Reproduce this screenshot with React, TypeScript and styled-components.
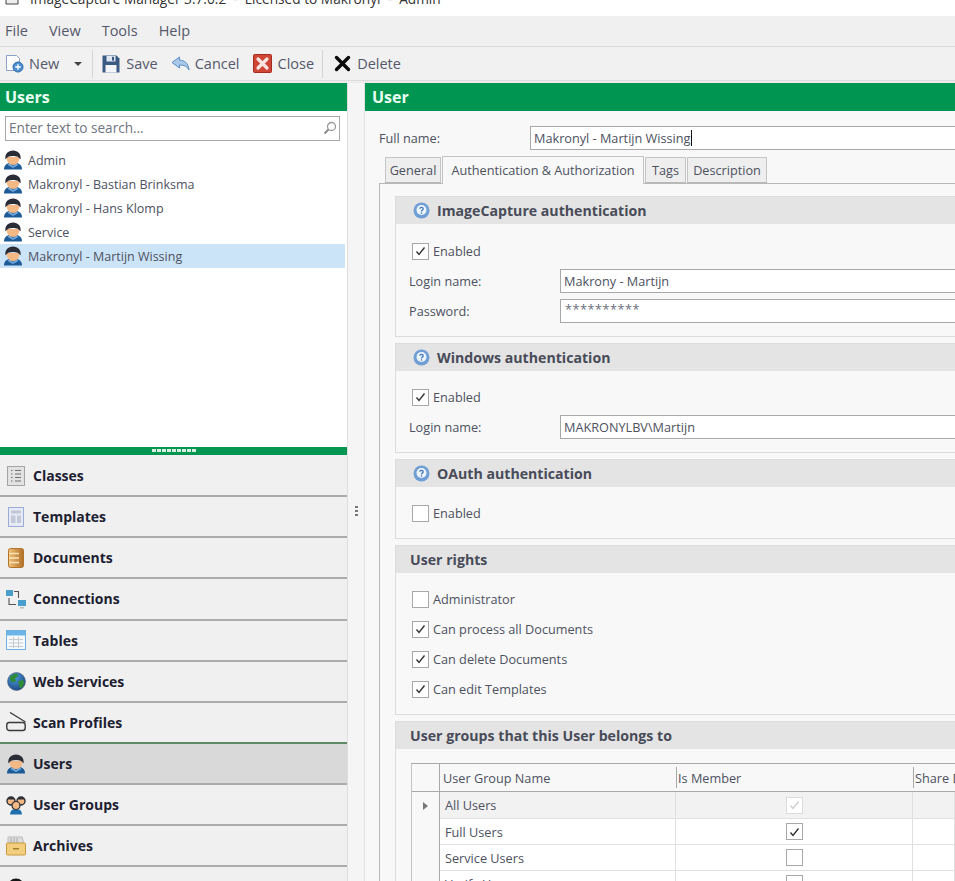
import React from "react";
import styled, { createGlobalStyle } from "styled-components";

const Global = createGlobalStyle`
  html, body { margin: 0; padding: 0; background: #fff; }
  * { box-sizing: border-box; }
  body { font-family: "Open Sans", "Noto Sans", sans-serif; }
`;

const Page = styled.div`
  width: 955px; height: 881px; overflow: hidden; display: flex; flex-direction: column;
  background: #f0f0f0; color: #4d5160; font-size: 12.7px;
`;
const TitleBar = styled.div`
  height: 16px; flex: none; background: #fff; display: flex; align-items: center; padding-left: 5px; overflow: hidden;
  font-size: 13.7px; color: #333; white-space: pre;
`;
const TitleInner = styled.div`
  display: flex; align-items: center; gap: 7px; margin-top: -20px;
`;
const MenuBar = styled.div`
  height: 31px; flex: none; display: flex; align-items: center; padding: 0 0 2px 5px; gap: 21px; background: #f0f0f0;
  border-bottom: 1px solid #d8d8d8; font-size: 14.5px; color: #55586a;
`;
const ToolBar = styled.div`
  height: 34px; flex: none; display: flex; align-items: center; background: #f1f1f1; padding-left: 5px;
  border-bottom: 1px solid #dcdcdc; font-size: 14.5px; color: #55586a;
`;
const ToolBtn = styled.div<{ $gap?: number; $ml?: number }>`
  display: flex; align-items: center; gap: ${p => p.$gap ?? 6}px; margin-left: ${p => p.$ml ?? 0}px;
`;
const ToolSep = styled.div<{ $ml: number }>`
  width: 1px; height: 28px; background: #d4d4d4; margin-left: ${p => p.$ml}px;
`;
const Caret = styled.div`
  width: 0; height: 0; margin-left: 15px; border-left: 4px solid transparent; border-right: 4px solid transparent; border-top: 4px solid #444;
`;
const Body = styled.div`
  flex: 1; display: flex; padding-top: 2px; min-height: 0; background: #ececec;
`;
const LeftPane = styled.div`
  width: 347px; flex: none; display: flex; flex-direction: column; background: #fff; min-height: 0;
`;
const PaneHeader = styled.div<{ $pad: number }>`
  height: 28px; flex: none; background: #009651; color: #eafff2; font-weight: 700; font-size: 16px; display: flex; align-items: center; padding-left: ${p => p.$pad}px;
`;
const SearchWrap = styled.div`
  padding: 5px 7px 0 5px; flex: none;
`;
const SearchBox = styled.div`
  height: 25px; border: 1px solid #a8a8a8; display: flex; align-items: center; justify-content: space-between; padding: 0 2px 2px 3px;
  font-size: 13.6px; color: #71757f; background: #fff;
`;
const UserList = styled.div`
  flex: 1; padding-top: 7px; display: flex; flex-direction: column; min-height: 0;
`;
const UserRow = styled.div<{ $sel?: boolean }>`
  height: 24px; flex: none; width: 345px; display: flex; align-items: center; gap: 5px; padding-left: 3px;
  font-size: 12.5px; background: ${p => (p.$sel ? "#cce4f7" : "transparent")};
`;
const Splitter = styled.div`
  height: 8px; flex: none; background: #009651; display: flex; justify-content: center; align-items: flex-start; padding-top: 2px; gap: 1px;
`;
const SplitDot = styled.div`
  width: 4px; height: 3px; background: #d8eee0;
`;
const NavList = styled.div`
  flex: none; height: 426px; overflow: hidden; background: #f0f0f0; padding-top: 1px;
`;
const NavRow = styled.div<{ $active?: boolean; $green?: boolean }>`
  height: 41.15px; display: flex; align-items: center; padding-left: 6px; gap: 7px;
  font-size: 14px; font-weight: 700; color: #1c2030;
  background: ${p => (p.$active ? "#d9d9d9" : "#f0f0f0")};
  border-bottom: 2px solid ${p => (p.$green ? "#5f8a66" : "#acacac")};
`;
const NavIcon = styled.div`
  width: 20px; display: flex; justify-content: center; flex: none;
`;
const Gutter = styled.div`
  width: 18px; flex: none; background: #f5f5f5; border-left: 1px solid #dedede; border-right: 1px solid #e2e2e2;
  display: flex; flex-direction: column; align-items: center; padding-top: 423px; gap: 2px;
`;
const GripDot = styled.div`
  width: 3px; height: 2px; background: #777;
`;
const RightPane = styled.div`
  flex: 1; display: flex; flex-direction: column; background: #f8f8f8; min-width: 0; overflow: hidden;
`;
const FullNameRow = styled.div`
  display: flex; align-items: center; padding: 15px 0 0 14px; height: 39px; flex: none;
`;
const FieldLabel = styled.div<{ $w: number }>`
  width: ${p => p.$w}px; flex: none; color: #4d5160;
`;
const Input = styled.div`
  flex: 1; height: 24px; background: #fff; border: 1px solid #a8a8a8; border-right: none; display: flex; align-items: center; padding-left: 3px;
  color: #4d5160; white-space: nowrap;
`;
const Stars = styled.span`
  letter-spacing: 0.5px; margin: -5px 0 0 1px; color: #6a6e7c;
`;
const Cursor = styled.span`
  display: inline-block; width: 1px; height: 16px; background: #111;
`;
const TabBar = styled.div`
  display: flex; align-items: flex-end; height: 27px; margin-top: 6px; padding-left: 20px; flex: none; position: relative; z-index: 1;
`;
const Tab = styled.div<{ $active?: boolean; $w: number }>`
  width: ${p => p.$w}px; height: 26px; flex: none; display: flex; align-items: center; justify-content: center;
  color: #4d5160; border: 1px solid #c4c4c4; margin-right: 1px;
  background: ${p => (p.$active ? "#f8f8f8" : "#eeeeee")};
  border-bottom: ${p => (p.$active ? "none" : "1px solid #b8b8b8")};
  ${p => p.$active && "margin-bottom: -1px; height: 28px; padding-bottom: 2px;"}
`;
const TabPage = styled.div`
  flex: 1; margin-left: 14px; border-left: 1px solid #b8b8b8; border-top: 1px solid #b8b8b8; padding: 12px 0 0 15px; display: flex; flex-direction: column; gap: 6px; min-height: 0;
`;
const Section = styled.div<{ $h: number }>`
  height: ${p => p.$h}px; flex: none; border: 1px solid #dcdcdc; border-right: none; display: flex; flex-direction: column;
`;
const SectionHead = styled.div`
  height: 27px; flex: none; background: #e4e4e4; display: flex; align-items: center; padding-left: 14px; gap: 7px;
  font-size: 14.15px; font-weight: 700; color: #484b58;
`;
const SectionBody = styled.div<{ $top?: number }>`
  padding: ${p => p.$top ?? 11}px 0 0 16px; display: flex; flex-direction: column;
`;
const CheckRow = styled.div`
  height: 30px; flex: none; display: flex; align-items: center; gap: 4px; color: #4d5160;
`;
const Box = styled.div<{ $dim?: boolean }>`
  width: 17px; height: 17px; flex: none; border: 1px solid ${p => (p.$dim ? "#dcdcdc" : "#a8a8a8")}; background: #fff; display: flex; align-items: center; justify-content: center;
`;
const FieldRow = styled.div`
  display: flex; align-items: center; height: 30px; margin-left: -3px;
`;
const Grid = styled.div`
  margin: 14px 0 0 15px; border-top: 1px solid #a8a8a8; border-left: 1px solid #c4c4c4; color: #4d5160;
`;
const GridRow = styled.div<{ $h: number; $sel?: boolean; $head?: boolean }>`
  display: grid; grid-template-columns: 28px 236px 237px 1fr; height: ${p => p.$h}px;
  background: ${p => (p.$sel ? "#f2f2f2" : "#fff")};
  ${p => p.$head && "background:#f8f8f8; border-bottom: 1px solid #a8a8a8;"}
`;
const Indicator = styled.div`
  background: #f8f8f8; border-right: 1px solid #a8a8a8; display: flex; align-items: center; justify-content: center;
`;
const HeadCell = styled.div<{ $sep?: boolean }>`
  display: flex; align-items: center; padding-left: ${p => (p.$sep ? 1 : 3)}px; white-space: nowrap; overflow: hidden;
  ${p => p.$sep && "border-left: 1px solid #a8a8a8; margin: 3px 0;"}
`;
const Cell = styled.div<{ $center?: boolean }>`
  display: flex; align-items: center; padding-left: ${p => (p.$center ? 0 : 5)}px; justify-content: ${p => (p.$center ? "center" : "flex-start")};
  border-right: 1px solid #e0e0e0; border-bottom: 1px solid #e0e0e0; white-space: nowrap;
`;
const RowArrow = styled.div`
  width: 0; height: 0; border-top: 4px solid transparent; border-bottom: 4px solid transparent; border-left: 5px solid #777;
`;
const InfoWrap = styled.div`
  display: flex; margin-left: 3px;
`;

const UserIcon = ({ s = 20 }: { s?: number }) => (
  <svg width={s} height={s} viewBox="0 0 20 20">
    <path d="M1 19.5c0-4 2.5-6 5-6.5h8c2.5.5 5 2.5 5 6.5z" fill="#1c5a98" />
    <path d="M6 13l4 3 4-3 1.5 2-5.5 3-5.5-3z" fill="#6ea6d8" />
    <path d="M3.5 7c0 5 3 8 6.5 8s6.500-3 6.500-8z" fill="#f3b884" />
    <path d="M2.5 9.500C1.500 4 5 .5 10 .5s8.500 3.500 7.500 9c-1.500-2.500-3.500-3.500-7.500-3.500s-6 1-7.500 3.500z" fill="#2a2d36" />
  </svg>
);
const GroupIcon = () => (
  <svg width="20" height="20" viewBox="0 0 20 20">
    <circle cx="5" cy="6" r="4" fill="#f3b884" stroke="#2a2d36" strokeWidth="1.4" />
    <circle cx="15" cy="6" r="4" fill="#f3b884" stroke="#2a2d36" strokeWidth="1.4" />
    <path d="M1.5 4.5C2 1.5 8 1.5 8.5 4.5zM11.5 4.5C12 1.5 18 1.5 18.5 4.5z" fill="#2a2d36" />
    <path d="M4 19.5c0-3 2-5 3-5h6c1 0 3 2 3 5z" fill="#1f6fae" />
    <circle cx="10" cy="10.5" r="4" fill="#f3b884" stroke="#2a2d36" strokeWidth="1.2" />
  </svg>
);
const NewIcon = () => (
  <svg width="19" height="19" viewBox="0 0 19 19">
    <path d="M1.5 1.5h10l3 3v12h-13z" fill="#fff" stroke="#8aa0c4" />
    <circle cx="13" cy="13" r="5" fill="#4e8fd0" stroke="#2f6aa8" />
    <path d="M13 10.2v5.6M10.2 13h5.6" stroke="#fff" strokeWidth="1.4" />
  </svg>
);
const SaveIcon = () => (
  <svg width="18" height="18" viewBox="0 0 18 18">
    <path d="M.5.5h14l3 3v14H.5z" fill="#3a5a84" />
    <rect x="4.5" y="1" width="9" height="5.5" fill="#dfe6f0" />
    <rect x="10" y="1.8" width="2" height="3.8" fill="#3a5a84" />
    <rect x="3.5" y="10" width="11" height="7.5" fill="#f2f4f8" />
  </svg>
);
const CancelIcon = () => (
  <svg width="19" height="16" viewBox="0 0 19 16">
    <path d="M1 6.5L8.5 1v3.2c5 0 9 3 9.5 9.8-1.800-3.600-4.600-5-9.500-5V12z" fill="#a9c8ea" stroke="#5b8fc4" strokeWidth="1" />
  </svg>
);
const CloseIcon = () => (
  <svg width="19" height="19" viewBox="0 0 19 19">
    <rect x=".5" y=".5" width="18" height="18" rx="1" fill="#cf4637" stroke="#a62b20" />
    <path d="M5 5l9 9M14 5l-9 9" stroke="#f8e4e0" strokeWidth="3.2" strokeLinecap="round" />
  </svg>
);
const DeleteIcon = () => (
  <svg width="17" height="17" viewBox="0 0 17 17">
    <path d="M2.5 2.5l12 12M14.5 2.500l-12 12" stroke="#0b0b0b" strokeWidth="3.4" strokeLinecap="round" />
  </svg>
);
const SearchIcon = () => (
  <svg width="14" height="14" viewBox="0 0 14 14">
    <circle cx="8.5" cy="5.5" r="4" fill="none" stroke="#9a9a9a" strokeWidth="1.3" />
    <path d="M5.5 8.5L1.5 12.5" stroke="#8a8a8a" strokeWidth="2" />
  </svg>
);
const ClassesIcon = () => (
  <svg width="18" height="20" viewBox="0 0 18 20">
    <rect x=".5" y=".5" width="17" height="19" fill="#e2e2e2" stroke="#a4a4a4" />
    <path d="M4 4.5h1.500M8 4.500h6M4 8h1.500M8 8h6M4 11.500h1.500M8 11.500h6M4 15h1.500M8 15h6" stroke="#6e6e6e" strokeWidth="1.2" />
  </svg>
);
const TemplatesIcon = () => (
  <svg width="16" height="20" viewBox="0 0 16 20">
    <rect x=".5" y=".5" width="15" height="19" fill="#e6eaf6" stroke="#9cacd8" />
    <path d="M3 3.500h10v3H3zM3 8.500h4.500V16H3zM9 8.500h4V16H9z" fill="#c3c8d8" />
  </svg>
);
const DocsIcon = () => (
  <svg width="16" height="20" viewBox="0 0 16 20">
    <defs>
      <linearGradient id="docg" x1="0" x2="1" y1="0" y2="0">
        <stop offset="0" stopColor="#f2c27a" />
        <stop offset="1" stopColor="#b06f28" />
      </linearGradient>
    </defs>
    <rect x=".5" y=".5" width="15" height="19" rx="2" fill="url(#docg)" stroke="#b4742a" />
    <path d="M1 5.500h10M1 10h10M1 14.500h10" stroke="#fbe3b6" strokeWidth="1.6" />
  </svg>
);
const ConnIcon = () => (
  <svg width="20" height="20" viewBox="0 0 20 20">
    <rect x="0" y="1" width="7" height="6" fill="#4a9ecb" />
    <rect x="12" y="11" width="8" height="6" fill="#4a9ecb" />
    <path d="M8 2.500h4.500V9M3 9v6.500h7" fill="none" stroke="#555" strokeWidth="1.1" />
    <rect x="14" y="18" width="4" height="1.5" fill="#bbb" />
  </svg>
);
const TablesIcon = () => (
  <svg width="20" height="20" viewBox="0 0 20 20">
    <rect x=".5" y=".5" width="19" height="19" fill="#f4f8fc" stroke="#6fb2e0" />
    <rect x="1" y="1" width="18" height="4.5" fill="#6db4e8" />
    <path d="M3 9.500h14M3 13h14M3 16.500h14M7.500 7v11M12.500 7v11" stroke="#c9c9c9" strokeWidth="1" />
  </svg>
);
const GlobeIcon = () => (
  <svg width="19" height="19" viewBox="0 0 19 19">
    <defs>
      <radialGradient id="glb" cx="0.4" cy="0.3" r="0.8">
        <stop offset="0" stopColor="#4f9ade" />
        <stop offset="1" stopColor="#173f78" />
      </radialGradient>
    </defs>
    <circle cx="9.5" cy="9.5" r="9" fill="url(#glb)" stroke="#54637a" strokeWidth=".6" />
    <path d="M3 5c2-3 5-3.500 7-3.500l1 3-3 2 1 3-3 1-3-2zM11 9l5-1 1.500 3-3 5.500-2-1z" fill="#2f8a3c" />
  </svg>
);
const ScanIcon = () => (
  <svg width="20" height="20" viewBox="0 0 20 20">
    <path d="M4 .5L19.5 10" stroke="#3a3a3a" strokeWidth="1.3" />
    <rect x=".8" y="10.5" width="18.4" height="8" rx="2.5" fill="none" stroke="#3a3a3a" strokeWidth="1.4" />
  </svg>
);
const ArchiveIcon = () => (
  <svg width="20" height="20" viewBox="0 0 20 20">
    <path d="M2 1h14l2 7H2z" fill="#dcdcdc" stroke="#bbb" />
    <path d="M5 2v5M8 2v5M11 2v5" stroke="#aaa" />
    <rect x=".5" y="7" width="19" height="12" rx="1" fill="#f1cf7c" stroke="#c59a3f" />
    <rect x="7" y="12" width="6" height="1.5" fill="#a57e2e" />
  </svg>
);
const BlackIcon = () => (
  <svg width="20" height="20" viewBox="0 0 20 20">
    <circle cx="10" cy="10" r="8.5" fill="#161616" />
  </svg>
);
const InfoIcon = () => (
  <svg width="17" height="17" viewBox="0 0 17 17">
    <circle cx="8.5" cy="8.5" r="8" fill="#6f9fd4" />
    <circle cx="8.5" cy="8" r="5" fill="#eef4fb" />
    <path d="M6.8 6.8c0-2 3.400-2 3.400 0 0 1.200-1.700 1.200-1.700 2.600" fill="none" stroke="#3f74b4" strokeWidth="1.3" />
    <circle cx="8.5" cy="11" r=".8" fill="#3f74b4" />
  </svg>
);
const Check = ({ c = "#333" }: { c?: string }) => (
  <svg width="11" height="10" viewBox="0 0 11 10">
    <path d="M1.5 5.5L4 8.500 9.500 1.500" fill="none" stroke={c} strokeWidth="1.4" />
  </svg>
);
const TitleIcon = () => (
  <svg width="18" height="18" viewBox="0 0 18 18">
    <path d="M1 5h12v10H1z" fill="#eee" stroke="#444" />
    <path d="M6 1h10v8H6z" fill="#ddd" stroke="#444" />
  </svg>
);

const CheckItem = ({ on, label }: { on?: boolean; label: string }) => (
  <CheckRow>
    <Box>{on && <Check />}</Box>
    {label}
  </CheckRow>
);
const Info = () => <InfoWrap><InfoIcon /></InfoWrap>;

const navItems: [string, React.ReactNode][] = [
  ["Classes", <ClassesIcon />],
  ["Templates", <TemplatesIcon />],
  ["Documents", <DocsIcon />],
  ["Connections", <ConnIcon />],
  ["Tables", <TablesIcon />],
  ["Web Services", <GlobeIcon />],
  ["Scan Profiles", <ScanIcon />],
  ["Users", <UserIcon />],
  ["User Groups", <GroupIcon />],
  ["Archives", <ArchiveIcon />],
  ["", <BlackIcon />],
];
const users = ["Admin", "Makronyl - Bastian Brinksma", "Makronyl - Hans Klomp", "Service", "Makronyl - Martijn Wissing"];

export default function App() {
  return (
    <Page>
      <Global />
      <TitleBar>
        <TitleInner>
          <TitleIcon />
          {"ImageCapture Manager 3.7.0.2  -  Licensed to Makronyl  -  Admin"}
        </TitleInner>
      </TitleBar>
      <MenuBar>
        <span>File</span><span>View</span><span>Tools</span><span>Help</span>
      </MenuBar>
      <ToolBar>
        <ToolBtn $gap={5}><NewIcon />New</ToolBtn>
        <Caret />
        <ToolSep $ml={10} />
        <ToolBtn $ml={9}><SaveIcon />Save</ToolBtn>
        <ToolBtn $ml={13} $gap={5}><CancelIcon />Cancel</ToolBtn>
        <ToolBtn $ml={13}><CloseIcon />Close</ToolBtn>
        <ToolSep $ml={8} />
        <ToolBtn $ml={11}><DeleteIcon />Delete</ToolBtn>
      </ToolBar>
      <Body>
        <LeftPane>
          <PaneHeader $pad={5}>Users</PaneHeader>
          <SearchWrap>
            <SearchBox>Enter text to search…<SearchIcon /></SearchBox>
          </SearchWrap>
          <UserList>
            {users.map((u, i) => (
              <UserRow key={u} $sel={i === 4}><UserIcon />{u}</UserRow>
            ))}
          </UserList>
          <Splitter>
            {Array.from({ length: 9 }, (_, i) => <SplitDot key={i} />)}
          </Splitter>
          <NavList>
            {navItems.map(([n, ic], i) => (
              <NavRow key={i} $active={n === "Users"} $green={n === "Scan Profiles"}>
                <NavIcon>{ic}</NavIcon>{n}
              </NavRow>
            ))}
          </NavList>
        </LeftPane>
        <Gutter>
          <GripDot /><GripDot /><GripDot />
        </Gutter>
        <RightPane>
          <PaneHeader $pad={7}>User</PaneHeader>
          <FullNameRow>
            <FieldLabel $w={151}>Full name:</FieldLabel>
            <Input>Makronyl - Martijn Wissing<Cursor /></Input>
          </FullNameRow>
          <TabBar>
            <Tab $w={56}>General</Tab>
            <Tab $active $w={202}>Authentication &amp; Authorization</Tab>
            <Tab $w={41}>Tags</Tab>
            <Tab $w={80}>Description</Tab>
          </TabBar>
          <TabPage>
            <Section $h={141}>
              <SectionHead><Info />ImageCapture authentication</SectionHead>
              <SectionBody $top={12}>
                <CheckItem on label="Enabled" />
                <FieldRow><FieldLabel $w={151}>Login name:</FieldLabel><Input>Makrony - Martijn</Input></FieldRow>
                <FieldRow><FieldLabel $w={151}>Password:</FieldLabel><Input><Stars>**********</Stars></Input></FieldRow>
              </SectionBody>
            </Section>
            <Section $h={110}>
              <SectionHead><Info />Windows authentication</SectionHead>
              <SectionBody>
                <CheckItem on label="Enabled" />
                <FieldRow><FieldLabel $w={151}>Login name:</FieldLabel><Input>MAKRONYLBV\Martijn</Input></FieldRow>
              </SectionBody>
            </Section>
            <Section $h={80}>
              <SectionHead><Info />OAuth authentication</SectionHead>
              <SectionBody>
                <CheckItem label="Enabled" />
              </SectionBody>
            </Section>
            <Section $h={170}>
              <SectionHead>User rights</SectionHead>
              <SectionBody>
                <CheckItem label="Administrator" />
                <CheckItem on label="Can process all Documents" />
                <CheckItem on label="Can delete Documents" />
                <CheckItem on label="Can edit Templates" />
              </SectionBody>
            </Section>
            <Section $h={200}>
              <SectionHead>User groups that this User belongs to</SectionHead>
              <Grid>
                <GridRow $h={28} $head>
                  <Indicator />
                  <HeadCell>User Group Name</HeadCell>
                  <HeadCell $sep>Is Member</HeadCell>
                  <HeadCell $sep>Share Documents</HeadCell>
                </GridRow>
                <GridRow $h={27} $sel>
                  <Indicator><RowArrow /></Indicator>
                  <Cell>All Users</Cell>
                  <Cell $center><Box $dim><Check c="#d0d0d0" /></Box></Cell>
                  <Cell />
                </GridRow>
                <GridRow $h={26}>
                  <Indicator />
                  <Cell>Full Users</Cell>
                  <Cell $center><Box><Check /></Box></Cell>
                  <Cell />
                </GridRow>
                <GridRow $h={26}>
                  <Indicator />
                  <Cell>Service Users</Cell>
                  <Cell $center><Box /></Cell>
                  <Cell />
                </GridRow>
                <GridRow $h={26}>
                  <Indicator />
                  <Cell>Verify Users</Cell>
                  <Cell $center><Box /></Cell>
                  <Cell />
                </GridRow>
              </Grid>
            </Section>
          </TabPage>
        </RightPane>
      </Body>
    </Page>
  );
}
